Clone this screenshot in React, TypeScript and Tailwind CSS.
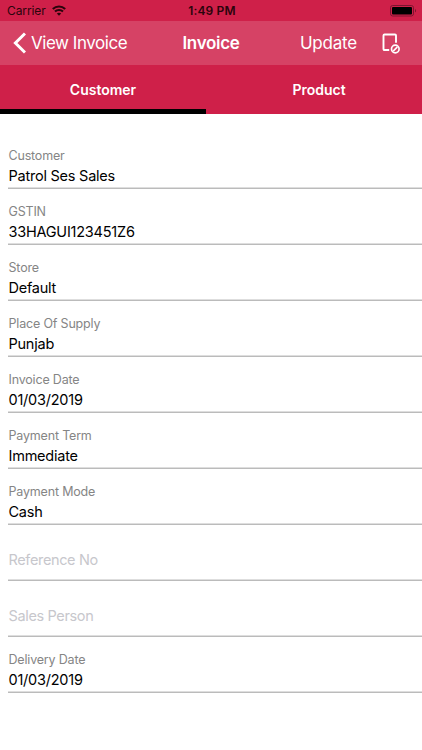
import React, { useState } from 'react';

interface Field {
  label: string;
  value?: string;
}

const TABS = ['Customer', 'Product'];

const FIELDS: Field[] = [
  { label: 'Customer', value: 'Patrol Ses Sales' },
  { label: 'GSTIN', value: '33HAGUI123451Z6' },
  { label: 'Store', value: 'Default' },
  { label: 'Place Of Supply', value: 'Punjab' },
  { label: 'Invoice Date', value: '01/03/2019' },
  { label: 'Payment Term', value: 'Immediate' },
  { label: 'Payment Mode', value: 'Cash' },
  { label: 'Reference No' },
  { label: 'Sales Person' },
  { label: 'Delivery Date', value: '01/03/2019' },
];

const WifiIcon = () => (
  <svg width="14" height="11" viewBox="0 0 14 11" fill="none" stroke="#2b040c" strokeWidth="2.1">
    <path d="M0.8 4.1C4.3 0.7 9.7 0.7 13.2 4.1" />
    <path d="M3 6.6C5.2 4.5 8.8 4.5 11 6.6" />
    <path d="M4.8 8.5C6.1 7.4 7.9 7.4 9.2 8.5L7 10.7Z" fill="#2b040c" stroke="none" />
  </svg>
);

const BatteryIcon = () => (
  <svg width="27" height="12" viewBox="0 0 27 12" fill="none">
    <rect x="0.5" y="0.5" width="23" height="10.5" rx="2.2" stroke="#7d1430" />
    <rect x="2" y="2" width="20" height="7.5" rx="1" fill="#000" />
    <path d="M25 4C26.4 4.6 26.4 7 25 7.6Z" fill="#7d1430" />
  </svg>
);

const CancelInvoiceIcon = () => (
  <svg width="19" height="22" viewBox="0 0 19 22" fill="none" stroke="#fff" strokeWidth="1.9">
    <path d="M7.2 18H2.5Q1.5 18 1.5 17V3.5Q1.5 2.5 2.5 2.5H13Q14 2.5 14 3.5V10.8" />
    <circle cx="13.3" cy="17" r="3.8" strokeWidth="1.7" />
    <path d="M11.2 19.1L15.4 14.9" strokeWidth="1.6" />
  </svg>
);

const FieldRow: React.FC<{ field: Field }> = ({ field }) => (
  <div className="ml-2 pl-[0.5px] h-14 flex flex-col border-b border-[#bbbbbb] shadow-[inset_0_-1px_0_#dedede]">
    {field.value ? (
      <>
        <span className="mt-[14px] h-[17px] text-[12.5px] leading-[17px] tracking-[-0.18px] text-[#858585]">{field.label}</span>
        <span className="mt-[2px] h-[20px] text-[14.5px] leading-[20px] tracking-[-0.23px] text-black">{field.value}</span>
      </>
    ) : (
      <span className="mt-[25px] text-[14.5px] leading-[20px] tracking-[-0.36px] text-[#c7c7cc]">{field.label}</span>
    )}
  </div>
);

export default function App() {
  const [activeTab, setActiveTab] = useState(0);

  return (
    <div className="w-full h-[750px] overflow-hidden bg-white font-['Inter',sans-serif]">
      {/* Status bar */}
      <div className="h-[21px] bg-[#cf2049] grid grid-cols-3 items-center pl-[7px] pr-[5px] text-[#2b040c]">
        <div className="flex items-center gap-[6px]">
          <span className="text-[12px] leading-[21px] tracking-[-0.1px]">Carrier</span>
          <WifiIcon />
        </div>
        <span className="text-center text-[12px] leading-[21px] font-semibold tracking-[0.15px]">1:49 PM</span>
        <div className="flex justify-end">
          <BatteryIcon />
        </div>
      </div>

      {/* Navigation bar */}
      <header className="h-[44px] bg-[#d64265] grid grid-cols-[1fr_auto_1fr] items-center pl-[13px] pr-[21px] text-white">
        <button className="flex items-center gap-[5px] text-left">
          <svg width="13" height="22" viewBox="0 0 13 22" fill="none" stroke="currentColor" strokeWidth="3">
            <path d="M12 1.5L2.4 11L12 20.5" />
          </svg>
          <span className="pt-[2px] text-[17px] tracking-[-0.46px] whitespace-nowrap">View Invoice</span>
        </button>
        <h1 className="pt-[2px] pl-[8px] text-[17px] font-semibold tracking-[-0.3px]">Invoice</h1>
        <div className="flex items-center justify-end gap-[25px]">
          <button className="pt-[2px] text-[17px] tracking-[-0.2px]">Update</button>
          <CancelInvoiceIcon />
        </div>
      </header>

      {/* Tabs */}
      <nav className="h-[49px] bg-[#cf2049] flex justify-between">
        {TABS.map((tab, i) => (
          <button
            key={tab}
            onClick={() => setActiveTab(i)}
            className={`h-full w-[206px] pt-[5px] border-b-[5px] text-[14px] font-semibold text-white ${activeTab === i ? 'border-black' : 'border-transparent'}`}
          >
            {tab}
          </button>
        ))}
      </nav>

      {/* Invoice fields */}
      <main className="pt-[19px]">
        {FIELDS.map((field) => (
          <FieldRow key={field.label} field={field} />
        ))}
      </main>
    </div>
  );
}
